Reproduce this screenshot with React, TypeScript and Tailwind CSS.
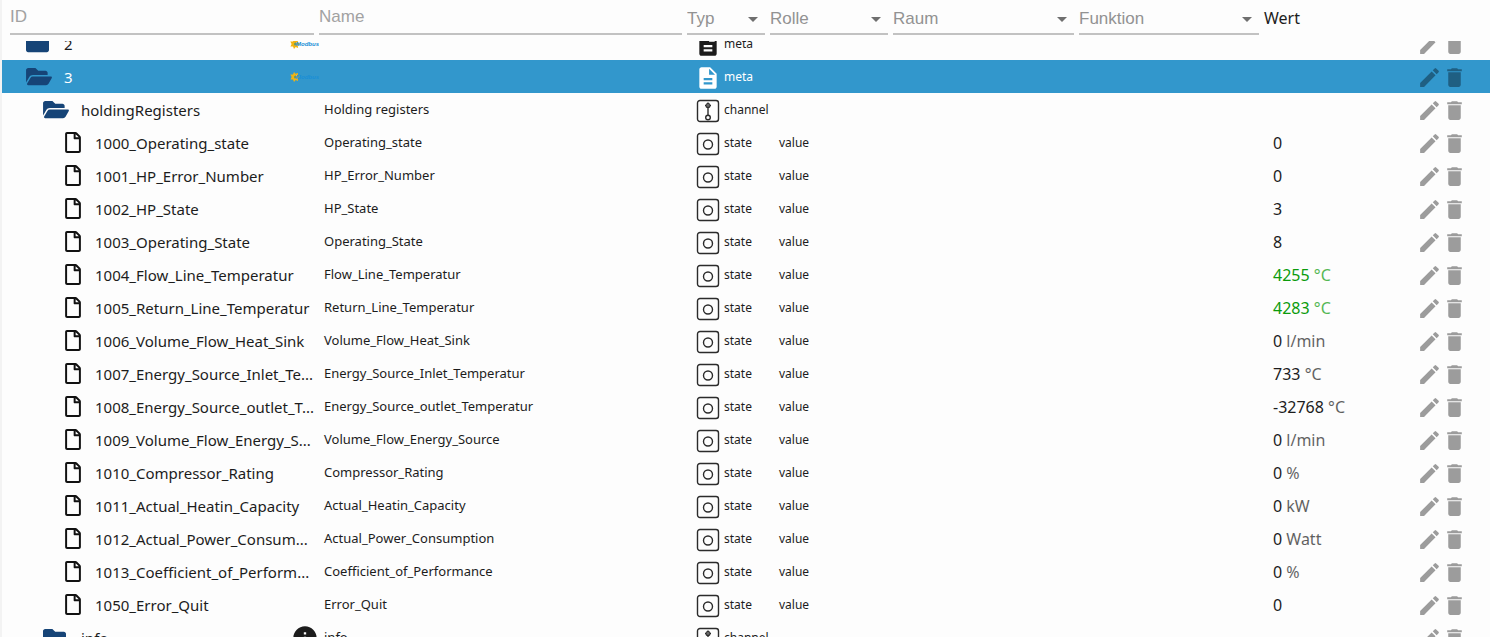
import React, { useLayoutEffect, useRef } from 'react';
import { FaFolder, FaFolderOpen, FaRegFile } from 'react-icons/fa';
import { MdArrowDropDown, MdDelete, MdDescription, MdEdit, MdInfo } from 'react-icons/md';

type Row = {
  id: string;
  kind: 'folder' | 'open' | 'file';
  level: number;
  name?: string;
  type: 'meta' | 'channel' | 'state';
  role?: string;
  value?: string;
  unit?: string;
  changed?: boolean;
  icon?: 'modbus' | 'info';
  selected?: boolean;
};

const state = (id: string, name: string, value: string, unit = '', changed = false): Row => ({
  id, name, value, unit, changed, kind: 'file', level: 2, type: 'state', role: 'value',
});

const rows: Row[] = [
  { id: '2', kind: 'folder', level: 0, type: 'meta', icon: 'modbus' },
  { id: '3', kind: 'open', level: 0, type: 'meta', icon: 'modbus', selected: true },
  { id: 'holdingRegisters', kind: 'open', level: 1, name: 'Holding registers', type: 'channel' },
  state('1000_Operating_state', 'Operating_state', '0'),
  state('1001_HP_Error_Number', 'HP_Error_Number', '0'),
  state('1002_HP_State', 'HP_State', '3'),
  state('1003_Operating_State', 'Operating_State', '8'),
  state('1004_Flow_Line_Temperatur', 'Flow_Line_Temperatur', '4255', '°C', true),
  state('1005_Return_Line_Temperatur', 'Return_Line_Temperatur', '4283', '°C', true),
  state('1006_Volume_Flow_Heat_Sink', 'Volume_Flow_Heat_Sink', '0', 'l/min'),
  state('1007_Energy_Source_Inlet_Te...', 'Energy_Source_Inlet_Temperatur', '733', '°C'),
  state('1008_Energy_Source_outlet_T...', 'Energy_Source_outlet_Temperatur', '-32768', '°C'),
  state('1009_Volume_Flow_Energy_S...', 'Volume_Flow_Energy_Source', '0', 'l/min'),
  state('1010_Compressor_Rating', 'Compressor_Rating', '0', '%'),
  state('1011_Actual_Heatin_Capacity', 'Actual_Heatin_Capacity', '0', 'kW'),
  state('1012_Actual_Power_Consum...', 'Actual_Power_Consumption', '0', 'Watt'),
  state('1013_Coefficient_of_Perform...', 'Coefficient_of_Performance', '0', '%'),
  state('1050_Error_Quit', 'Error_Quit', '0'),
  { id: 'info', kind: 'folder', level: 1, name: 'info', type: 'channel', icon: 'info' },
];

const indents = ['pl-6', 'pl-[41px]', 'pl-[63px]'];

const ModbusLogo: React.FC = () => (
  <svg viewBox="0 0 30 12" className="w-[30px] h-3 shrink-0" aria-label="Modbus">
    <path d="M5 1l1.500 1.800L9 2l-.2 2.400L11 6 8.800 7.300 9 10l-2.300-1L5 11 4 8.600 1.500 8.500 2.600 6 1.300 3.600 4 3.500z" fill="#f2b411" />
    <circle cx="6.500" cy="6" r="1.500" fill="#5f9a6a" />
    <text x="7" y="8" fontSize="6" fontWeight="700" fontStyle="italic" fontFamily="Liberation Sans, sans-serif" fill="#1a8fd6">Modbus</text>
  </svg>
);

const StateIcon: React.FC = () => (
  <svg viewBox="0 0 24 24" className="w-6 h-6 shrink-0" fill="none" stroke="#2b2b2b">
    <rect x="1.500" y="1.500" width="21" height="21" rx="2.500" strokeWidth="1.400" />
    <circle cx="12" cy="12.500" r="4.500" strokeWidth="1.400" />
  </svg>
);

const ChannelIcon: React.FC = () => (
  <svg viewBox="0 0 24 24" className="w-6 h-6 shrink-0" fill="none" stroke="#2b2b2b">
    <rect x="1.500" y="1.500" width="21" height="21" rx="2.500" strokeWidth="1.400" />
    <path d="M12 3.500V16" strokeWidth="1.400" />
    <circle cx="12" cy="6.500" r="2" strokeWidth="1.200" />
    <path d="M9 6.500h1.500M13.500 6.500H15" strokeWidth="1" />
    <circle cx="12" cy="18.500" r="2.300" strokeWidth="1.400" />
  </svg>
);

const TypeIcon: React.FC<{ type: Row['type'] }> = ({ type }) => {
  if (type === 'meta') return <MdDescription className="w-6 h-[26px] shrink-0" preserveAspectRatio="xMidYMid slice" />;
  return type === 'channel' ? <ChannelIcon /> : <StateIcon />;
};

const FilterInput: React.FC<{ label: string }> = ({ label }) => (
  <div className="h-[35px] border-b-2 border-[#c2c2c2]">
    <input
      aria-label={label}
      placeholder={label}
      className="block w-full h-[33px] bg-transparent outline-none placeholder:text-[#a2a2a2]"
    />
  </div>
);

const FilterSelect: React.FC<{ label: string }> = ({ label }) => (
  <div className="flex items-center h-[35px] pt-1 border-b-2 border-[#c2c2c2]">
    <select aria-label={label} className="flex-1 min-w-0 appearance-none bg-transparent outline-none text-[#929292]">
      <option>{label}</option>
    </select>
    <MdArrowDropDown className="w-6 h-6 shrink-0 text-[#6f6f6f]" />
  </div>
);

const ObjectRow: React.FC<{ row: Row }> = ({ row }) => (
  <tr className={row.selected ? 'h-[33px] bg-[#3297cc] text-white' : 'h-[33px]'}>
    <td className={indents[row.level]}>
      <div className="flex items-center">
        {row.kind === 'open' && <FaFolderOpen className="w-[26px] h-[23px] mr-3 shrink-0 text-[#164477]" />}
        {row.kind === 'folder' && <FaFolder className="w-[23px] h-[23px] mr-[15px] shrink-0 text-[#164477]" />}
        {row.kind === 'file' && <FaRegFile className="w-4 h-[21px] mr-[14px] shrink-0 text-[#111]" />}
        <span className="flex-1 whitespace-nowrap text-[15px] leading-6">{row.id}</span>
        {row.icon === 'modbus' && <ModbusLogo />}
        {row.icon === 'info' && <MdInfo className="w-7 h-7 shrink-0" />}
      </div>
    </td>
    <td className="pl-[5px] text-[13px]">{row.name}</td>
    <td className="pl-[9px] pt-0.5">
      <div className="flex items-center gap-1 text-xs">
        <TypeIcon type={row.type} />
        <span className="pb-px">{row.type}</span>
      </div>
    </td>
    <td className="pl-[9px] text-xs">{row.role}</td>
    <td />
    <td />
    <td className={row.changed ? 'pl-[9px] text-base text-[#0b9b0b]' : 'pl-[9px] text-base'}>
      {row.value}
      {row.unit && <span className="opacity-70"> {row.unit}</span>}
    </td>
    <td className="pt-0.5">
      <div className={row.selected ? 'flex text-[#1f5f82]' : 'flex text-[#9c9c9c]'}>
        <button aria-label={`Edit ${row.id}`}><MdEdit className="w-[25px] h-[25px]" /></button>
        <button aria-label={`Delete ${row.id}`}><MdDelete className="w-[25px] h-[25px]" /></button>
      </div>
    </td>
  </tr>
);

export default function App() {
  const scroller = useRef<HTMLDivElement>(null);

  useLayoutEffect(() => {
    if (scroller.current) scroller.current.scrollTop = 14;
  }, []);

  return (
    <div
      ref={scroller}
      className="h-screen overflow-auto [scrollbar-width:none] border-l-2 border-[#f3f3f3] bg-[#fdfdfd] text-[#1c1c1c] font-['Segoe_UI','Noto_Sans',sans-serif]"
    >
      <table className="w-full table-fixed border-separate border-spacing-0">
        <colgroup>
          <col className="w-[317px]" />
          <col />
          <col className="w-[83px]" />
          <col className="w-[123px]" />
          <col className="w-[186px]" />
          <col className="w-[185px]" />
          <col className="w-[153px]" />
          <col className="w-[73px]" />
        </colgroup>
        <thead className="sticky top-0 z-10 bg-[#fdfdfd] text-left text-[17px] font-['Liberation_Sans',Arial,sans-serif]">
          <tr className="h-[41px] align-top">
            <th className="pl-2 pr-[5px] font-normal"><FilterInput label="ID" /></th>
            <th className="pr-[5px] font-normal"><FilterInput label="Name" /></th>
            <th className="pr-[5px] font-normal"><FilterSelect label="Typ" /></th>
            <th className="pr-[5px] font-normal"><FilterSelect label="Rolle" /></th>
            <th className="pr-[5px] font-normal"><FilterSelect label="Raum" /></th>
            <th className="pr-[5px] font-normal"><FilterSelect label="Funktion" /></th>
            <th className="pt-[6px] text-base font-normal font-['Segoe_UI','Noto_Sans',sans-serif]">Wert</th>
            <th />
          </tr>
        </thead>
        <tbody>
          {rows.map((row) => (
            <ObjectRow key={row.id} row={row} />
          ))}
        </tbody>
      </table>
    </div>
  );
}
